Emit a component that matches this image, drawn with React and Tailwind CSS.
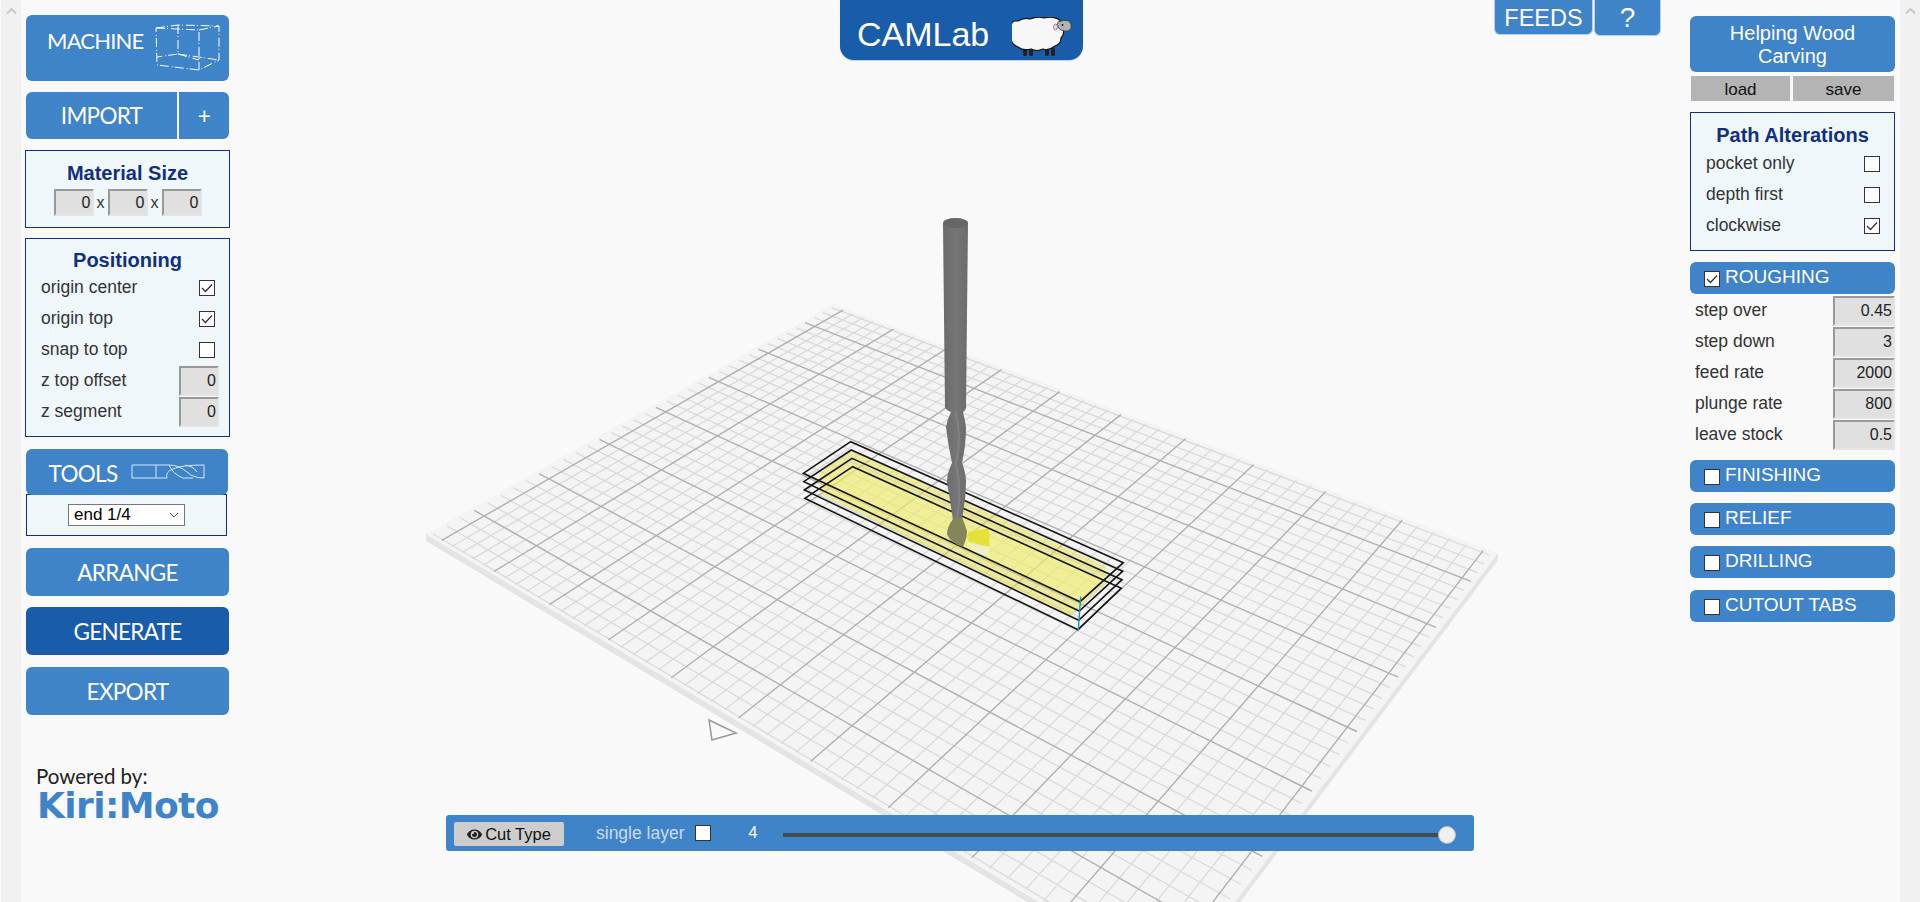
import React from 'react';
import { FaEye } from 'react-icons/fa';

// bed corners on screen: back, right, front (off page), left
const T = [833, 304];
const R = [1498, 553];
const B = [1174, 983];
const L = [426, 534];

const sx = T[0] - R[0] + B[0] - L[0];
const sy = T[1] - R[1] + B[1] - L[1];
const dx1 = R[0] - B[0];
const dx2 = L[0] - B[0];
const dy1 = R[1] - B[1];
const dy2 = L[1] - B[1];
const den = dx1 * dy2 - dx2 * dy1;
const g = (sx * dy2 - dx2 * sy) / den;
const h = (dx1 * sy - sx * dy1) / den;
const a = R[0] - T[0] + g * R[0];
const b = L[0] - T[0] + h * L[0];
const d = R[1] - T[1] + g * R[1];
const e = L[1] - T[1] + h * L[1];

const project = (u, v) => {
  const w = g * u + h * v + 1;
  return [((a * u + b * v + T[0]) / w).toFixed(1), ((d * u + e * v + T[1]) / w).toFixed(1)];
};

const gridPath = (major) => {
  let out = '';
  const uStep = 0.0192;
  const vStep = 0.0272;
  for (let i = 0; i < 52; i++) {
    if ((i % 5 === 0) !== major) continue;
    const u = 0.025 + i * uStep;
    if (u > 0.995) continue;
    const p = project(u, 0.008);
    const q = project(u, 0.995);
    out += `M${p[0]} ${p[1]}L${q[0]} ${q[1]}`;
  }
  for (let i = -3; i < 34; i++) {
    const isMajor = ((i % 5) + 5) % 5 === 0;
    if (isMajor !== major) continue;
    const v = 0.095 + i * vStep;
    if (v < 0.005 || v > 0.995) continue;
    const p = project(0.006, v);
    const q = project(0.995, v);
    out += `M${p[0]} ${p[1]}L${q[0]} ${q[1]}`;
  }
  return out;
};

const zx = (x) => 780 + x / 3;
const zy = (y) => 420 + y / 3;
const zp = (pts) => pts.map(([x, y]) => `${zx(x).toFixed(1)},${zy(y).toFixed(1)}`).join(' ');

const layers = [0, 1, 2, 3].map((k) =>
  zp([
    [70 + 1.5 * k, 160 + 25 * k],
    [212 + 2 * k, 65 + 25 * k],
    [1030 - 2 * k, 428 + 25.5 * k],
    [900 - 2 * k, 545 + 28 * k],
  ])
);

const BedCanvas = () => (
  <svg className="absolute inset-0 z-0 blur-[0.6px]" width="1920" height="902" viewBox="0 0 1920 902">
    <polygon points={`${L[0]},${L[1] + 7} ${L[0]},${L[1]} ${B[0]},${B[1]} ${R[0]},${R[1]} ${R[0]},${R[1] + 7} ${B[0]},${B[1] + 7}`} fill="#e4e4e4" />
    <polygon points={[T, R, B, L].map((p) => p.join(',')).join(' ')} fill="#f4f4f4" />
    <path d={gridPath(false)} stroke="#dadada" strokeWidth="1.3" fill="none" />
    <path d={gridPath(true)} stroke="#b0b0b0" strokeWidth="1.4" fill="none" />

    {/* stock */}
    <polygon points={zp([[118, 160], [212, 90], [978, 438], [975, 490], [870, 590], [120, 222]])} fill="#e4df4a" opacity="0.5" />
    <polygon points={zp([[125, 165], [218, 140], [975, 480], [900, 545], [125, 205]])} fill="#f8f68a" opacity="0.35" />
    <polygon points={zp([[565, 335], [628, 325], [628, 380], [565, 365]])} fill="#e6e03a" />
    <polygon points={zp([[565, 368], [628, 382], [625, 408], [580, 395]])} fill="#f1efc6" />
    {layers.map((pts) => (
      <polygon key={pts} points={pts} fill="none" stroke="#151515" strokeWidth="1.6" />
    ))}
    <line x1={zx(902)} y1={zy(530)} x2={zx(895)} y2={zy(630)} stroke="#1597bb" strokeWidth="1.4" />

    {/* cutter */}
    <defs>
      <linearGradient id="shaft" x1="0" x2="1" y1="0" y2="0">
        <stop offset="0" stopColor="#6a6a6a" />
        <stop offset="0.5" stopColor="#767676" />
        <stop offset="1" stopColor="#6c6c6c" />
      </linearGradient>
    </defs>
    <path d="M943 223 L945 408 Q948 411 951 412 Q947 420 946 427 Q948 445 952 463 Q947 473 947 482 Q950 500 953 520 L962 518 Q966 500 966 482 Q966 473 962 463 Q966 445 966 427 Q965 420 963 412 Q965 411 966 408 L968 223 Z" fill="url(#shaft)" />
    <ellipse cx="955.5" cy="223" rx="12.5" ry="5" fill="#666" />
    <path d="M956 412 Q962 440 956 463 Q962 490 957 518" stroke="#828282" strokeWidth="2" fill="none" />
    <path d="M953 519 Q947 527 947 534 Q950 543 963 547 Q967 538 967 531 Q965 525 962 517 Z" fill="#85855c" />

    {/* origin marker */}
    <polygon points="709,720 736,733 712,740" fill="#f9f9f9" stroke="#9b9b9b" strokeWidth="1.6" />
  </svg>
);

const Btn = ({ className = '', children }) => (
  <div className={`flex items-center justify-center bg-[#3f83c8] text-white rounded-[6px] font-['Lato',sans-serif] text-[22.5px] tracking-[-0.7px] ${className}`}>
    {children}
  </div>
);

const Check = ({ on }) => (
  <span className="block w-4 h-4 shrink-0 border border-[#333] bg-white">
    {on && (
      <svg width="14" height="14" viewBox="0 0 14 14">
        <path d="M2 7 L5.5 10.5 L12 3.5" fill="none" stroke="#333" strokeWidth="1.3" />
      </svg>
    )}
  </span>
);

const NumInput = ({ value, className = '' }) => (
  <input
    readOnly
    value={value}
    className={`block bg-[#e0e0e0] border-2 border-t-[#999] border-l-[#999] border-r-[#e4e4e4] border-b-[#e4e4e4] text-right text-[16px] text-[#222] pr-[1px] outline-none ${className}`}
  />
);

const CheckRow = ({ label, on }) => (
  <div className="flex items-center justify-between h-[31px] pl-[15px] pr-[14px] text-[17.5px] text-[#333]">
    <span>{label}</span>
    <Check on={on} />
  </div>
);

const InputRow = ({ label, value }) => (
  <div className="flex items-center justify-between h-[31px] pl-[15px] pr-[10px] text-[17.5px] text-[#333]">
    <span>{label}</span>
    <NumInput value={value} className="w-10 h-[30px]" />
  </div>
);

const SectionBar = ({ label, on, className = '' }) => (
  <div className={`flex items-center h-8 pl-[14px] gap-[5px] rounded-[6px] bg-[#3f83c8] text-white text-[19px] ${className}`}>
    <span className="translate-y-[1px]"><Check on={on} /></span>
    <span className="-translate-y-[1px]">{label}</span>
  </div>
);

const ParamRow = ({ label, value }) => (
  <div className="flex items-center justify-between h-[31px] pl-[5px] text-[17.5px] text-[#333]">
    <span>{label}</span>
    <NumInput value={value} className="w-[62px] h-[30px]" />
  </div>
);

const Scrollbar = ({ className = '' }) => (
  <div className={`h-full bg-[#f1f1f1] ${className}`}>
    <svg className="mt-[7px] ml-[5px]" width="11" height="8" viewBox="0 0 11 8">
      <path d="M1 6.5 L5.5 2 L10 6.5" fill="none" stroke="#c9c9c9" strokeWidth="2" />
    </svg>
  </div>
);

const MachineIcon = () => (
  <svg width="66" height="48" viewBox="0 0 66 48" fill="none" stroke="#fff" strokeWidth="1" strokeDasharray="9 2 1 3">
    <path d="M1 4 L23 1 L64 2 L64 36 L44 46 L2 41 Z" />
    <path d="M1 4 L44 6 L44 46 M44 6 L64 2 M23 1 L23 30 L2 33 M23 30 L64 36 M23 30 L44 36" />
  </svg>
);

const ToolsIcon = () => (
  <svg width="74" height="15" viewBox="0 0 74 15" fill="none" stroke="#d8e8f6" strokeWidth="1">
    <path d="M1 1 H25 V14 H1 Z" />
    <path d="M25 1 H38 Q48 1 56 8 Q62 14 73 14 M25 14 H36 Q34 8 42 5 Q50 1 73 1 V14 M38 1 Q42 10 52 14 H62 M54 1 Q62 2 66 8" />
  </svg>
);

const Sheep = () => (
  <svg width="60" height="40" viewBox="0 0 60 40">
    <rect x="11" y="31" width="4" height="8" rx="1.5" fill="#222" />
    <rect x="17" y="31" width="4" height="8" rx="1.5" fill="#222" />
    <rect x="33" y="31" width="4" height="8" rx="1.5" fill="#222" />
    <rect x="39" y="31" width="4" height="8" rx="1.5" fill="#222" />
    <path
      d="M6 4 q6 -4 12 -2 q8 -3 14 -1 q8 -2 14 1 q5 3 5 9 q2 6 -2 10 q0 6 -6 8 q-6 5 -12 3 q-6 3 -12 0 q-8 2 -13 -2 q-6 -2 -7 -8 q-3 -6 -1 -11 q1 -5 4 -7z"
      fill="#f7f7f7"
      stroke="#111"
      strokeWidth="1.2"
    />
    <path d="M46 5 q6 -3 11 -1 q3 3 2 8 q-3 3 -7 2 q-5 -1 -6 -4 q-1 -3 0 -5z" fill="#b2b2b2" stroke="#333" strokeWidth="0.8" />
    <ellipse cx="43.5" cy="10" rx="2" ry="3" fill="#e8d8e0" stroke="#9a6a80" strokeWidth="0.8" />
    <circle cx="50.5" cy="8" r="0.9" fill="#111" />
  </svg>
);

const boxClass = 'border border-[#12307f] bg-[#f0f7fb]';
const titleClass = 'text-center font-bold text-[20px] leading-[23px] text-[#12307f]';

export default function App() {
  return (
    <div className="relative w-[1920px] h-[902px] overflow-hidden bg-[#f9f9f9] font-['Liberation_Sans',Arial,sans-serif]">
      <BedCanvas />
      <div className="relative z-10 flex h-full">
        <Scrollbar className="w-[20px] ml-[1px] shrink-0" />

        {/* left column */}
        <div className="w-[205px] ml-[4px] shrink-0 flex flex-col">
          <Btn className="ml-[1px] w-[203px] h-[66px] mt-[15px] pl-[21px] pr-[8px]">
            <div className="flex items-center justify-between w-full">
              <span className="-translate-y-[8px] text-[22px] tracking-[-0.8px]">MACHINE</span>
              <MachineIcon />
            </div>
          </Btn>
          <div className="flex ml-[1px] w-[203px] h-[47px] mt-[11px] gap-[2px]">
            <Btn className="w-[151px] h-full rounded-r-none">IMPORT</Btn>
            <Btn className="w-[50px] h-full rounded-l-none">+</Btn>
          </div>
          <div className={`${boxClass} h-[78px] mt-[11px] pt-[11px]`}>
            <div className={titleClass}>Material Size</div>
            <div className="flex items-center justify-center mt-[4px] text-[16px] text-[#333] gap-[3px]">
              <NumInput value="0" className="w-10 h-[27px]" />
              <span>x</span>
              <NumInput value="0" className="w-10 h-[27px]" />
              <span>x</span>
              <NumInput value="0" className="w-10 h-[27px]" />
            </div>
          </div>
          <div className={`${boxClass} h-[199px] mt-[10px] pt-[10px]`}>
            <div className={titleClass}>Positioning</div>
            <CheckRow label="origin center" on />
            <CheckRow label="origin top" on />
            <CheckRow label="snap to top" />
            <InputRow label="z top offset" value="0" />
            <InputRow label="z segment" value="0" />
          </div>
          <Btn className="ml-[1px] w-[202px] h-[46px] mt-[12px] pt-[3px] gap-[14px] relative z-10">
            <span>TOOLS</span>
            <span className="-translate-y-[2px]"><ToolsIcon /></span>
          </Btn>
          <div className={`${boxClass} ml-[1px] w-[201px] h-[42px] -mt-[1px] flex justify-center pt-[9px]`}>
            <div className="relative w-[117px] h-[22px]">
              <select className="appearance-none block w-full h-full pl-[5px] bg-white border border-[#767676] text-[17px] leading-[20px] text-black" defaultValue="end 1/4">
                <option>end 1/4</option>
              </select>
              <svg className="absolute right-[6px] top-[8px]" width="10" height="6" viewBox="0 0 10 6">
                <path d="M1 1 L5 5 L9 1" fill="none" stroke="#555" strokeWidth="1" />
              </svg>
            </div>
          </div>
          <Btn className="ml-[1px] w-[203px] h-12 mt-[12px] pt-[2px]">ARRANGE</Btn>
          <Btn className="ml-[1px] w-[203px] h-12 mt-[11px] pt-[2px] !bg-[#195caa]">GENERATE</Btn>
          <Btn className="ml-[1px] w-[203px] h-12 mt-[12px] pt-[2px]">EXPORT</Btn>
          <div className="ml-[11px] mt-[50px] w-[190px]">
            <div className="font-['Lato',sans-serif] text-[20.5px] leading-[22px] text-[#222]">Powered by:</div>
            <div className="font-['DejaVu_Sans',sans-serif] font-bold text-[36px] leading-[38px] text-[#3f83c8] tracking-[-0.6px] ml-[1px]">Kiri:Moto</div>
          </div>
        </div>

        {/* middle: title, feeds and layer bar */}
        <div className="flex-1 flex flex-col">
          <div className="flex items-start pl-[610px]">
            <div className="flex items-center w-[243px] h-[60px] pl-[17px] pt-[8px] gap-[23px] bg-[#195caa] rounded-b-[14px] shadow-[0_1px_1px_#c8d0d8] text-white text-[34px]">
              <span>CAMLab</span>
              <span className="translate-y-[3px]"><Sheep /></span>
            </div>
            <div className="flex ml-[411px]">
              <div className="flex items-center justify-center w-[99px] h-[35px] pt-[4px] bg-[#3f83c8] border border-t-0 border-[#b8cfe6] rounded-b-[6px] text-white text-[23.5px]">FEEDS</div>
              <div className="flex items-center justify-center w-[67px] h-9 ml-[1px] bg-[#3f83c8] border border-t-0 border-[#b8cfe6] rounded-b-[6px] text-white text-[28px]">?</div>
            </div>
          </div>
          <div className="mt-auto mb-[51px] ml-[216px] w-[1028px] h-9 flex items-center bg-[#3f83c8] rounded-[3px] pl-[8px] pr-[26px]">
            <div className="flex items-center justify-center gap-[3px] w-[110px] h-6 mt-[2px] bg-[#cdcdcd] rounded-[2px] text-[16.5px] text-[#111]">
              <FaEye className="w-[15px] h-[15px] text-[#222]" />
              <span>Cut Type</span>
            </div>
            <span className="ml-8 text-[17.5px] text-[#c9dcf0]">single layer</span>
            <span className="ml-[10px]"><Check /></span>
            <span className="ml-[38px] text-[16px] text-white">4</span>
            <div className="relative ml-[26px] flex-1 h-1 mt-[4px] bg-[#444c52]">
              <span className="absolute -right-[8px] -top-[7px] w-[18px] h-[18px] rounded-full bg-[#efefef] border border-[#bbb]"></span>
            </div>
          </div>
        </div>

        {/* right column */}
        <div className="w-[205px] shrink-0 flex flex-col">
          <div className="flex items-center justify-center h-14 mt-4 pt-[2px] bg-[#3f83c8] rounded-[6px] text-white text-[20px] leading-[23px] text-center px-[20px]">
            Helping Wood Carving
          </div>
          <div className="flex mt-[4px] px-[1px] gap-[3px] h-[25px]">
            <div className="flex items-center justify-center w-[99px] pt-[2px] bg-[#b4b4b4] text-[17px] text-[#111]">load</div>
            <div className="flex items-center justify-center w-[101px] pt-[2px] bg-[#b4b4b4] text-[17px] text-[#111]">save</div>
          </div>
          <div className={`${boxClass} h-[139px] mt-[11px] pt-[11px]`}>
            <div className={titleClass}>Path Alterations</div>
            <div className="mt-[1px]">
              <CheckRow label="pocket only" />
              <CheckRow label="depth first" />
              <CheckRow label="clockwise" on />
            </div>
          </div>
          <SectionBar label="ROUGHING" on className="mt-[11px]" />
          <div className="mt-[1px]">
            <ParamRow label="step over" value="0.45" />
            <ParamRow label="step down" value="3" />
            <ParamRow label="feed rate" value="2000" />
            <ParamRow label="plunge rate" value="800" />
            <ParamRow label="leave stock" value="0.5" />
          </div>
          <SectionBar label="FINISHING" className="mt-[10px]" />
          <SectionBar label="RELIEF" className="mt-[11px]" />
          <SectionBar label="DRILLING" className="mt-[11px]" />
          <SectionBar label="CUTOUT TABS" className="mt-[12px]" />
        </div>
        <div className="w-[5px] shrink-0"></div>
        <Scrollbar className="w-5 shrink-0" />
      </div>
    </div>
  );
}
